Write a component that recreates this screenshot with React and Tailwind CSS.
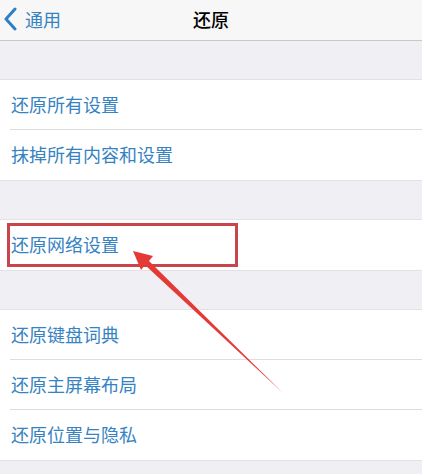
import React from "react";

const font = { fontFamily: '"Noto Sans CJK SC", "Noto Sans", sans-serif' };

/* ================= ROW ================= */

function Row({ label, last }) {
  return (
    <div className="h-[50px] flex items-center pl-[11px] pb-[3px] relative">
      <span className="text-[18px] text-[#3583c2] leading-none">{label}</span>
      {!last && (
        <div className="absolute left-[10px] right-0 bottom-0 h-px bg-[#dedee2]" />
      )}
    </div>
  );
}

function Group({ items }) {
  return (
    <div className="bg-white border-y border-[#e2e2e6]">
      {items.map((t, i) => (
        <Row key={t} label={t} last={i === items.length - 1} />
      ))}
    </div>
  );
}

export default function App() {
  return (
    <div className="w-[422px] h-[474px] bg-[#efeff4] relative overflow-hidden" style={font}>
      {/* ================= NAV ================= */}
      <div className="h-[41px] bg-[#f7f7f7] border-b border-[#c8c8cc] flex items-center relative">
        <div className="flex items-center pl-[4px] gap-[8px] pb-[3px]">
          <svg width="13" height="24" viewBox="0 0 13 24">
            <path d="M11 2 L2 12 L11 22" fill="none" stroke="#2f7fc4" strokeWidth="3" strokeLinecap="round" strokeLinejoin="round" />
          </svg>
          <span className="text-[18px] leading-none text-[#3583c2]">通用</span>
        </div>
        <span className="absolute left-1/2 -translate-x-1/2 pb-[3px] text-[18px] font-medium text-black leading-none">
          还原
        </span>
      </div>

      {/* ================= CONTENT ================= */}
      <div className="pt-[38px] flex flex-col gap-[38px]">
        <Group items={["还原所有设置", "抹掉所有内容和设置"]} />
        <Group items={["还原网络设置"]} />
        <Group items={["还原键盘词典", "还原主屏幕布局", "还原位置与隐私"]} />
      </div>

      {/* ================= ANNOTATION ================= */}
      <div className="absolute left-[7px] top-[223px] w-[231px] h-[44px] border-[3px] border-[#c9454b]" />
      <svg className="absolute left-0 top-0 pointer-events-none" width="422" height="474">
        <polygon points="133,251 153,256 149,261 283,393 145,265 141,270" fill="#e53935" />
      </svg>
    </div>
  );
}
